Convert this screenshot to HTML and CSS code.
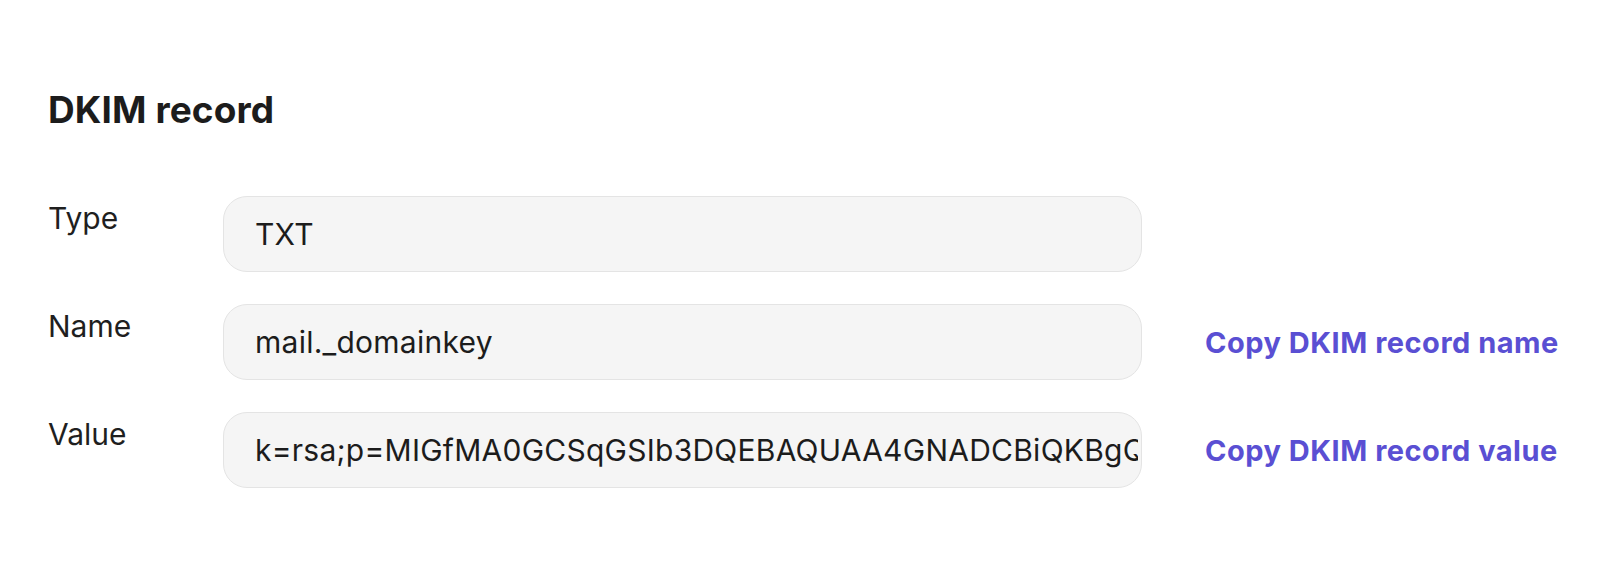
FILE: index.html
```html
<!DOCTYPE html>
<html lang="en">
<head>
  <meta charset="UTF-8">
  <meta name="viewport" content="width=device-width, initial-scale=1.0">
  <title>DKIM record</title>
  <link rel="stylesheet" href="styles.css">
</head>
<body>
  <div class="dns-record">
    <h2>DKIM record</h2>

    <div class="record-grid">
      <label for="dkimType">Type</label>
      <input type="text" id="dkimType" value="TXT" readonly>
      <span></span>

      <label for="dkimName">Name</label>
      <input type="text" id="dkimName" value="mail._domainkey" readonly>
      <a href="#" class="copy-link">Copy DKIM record name</a>

      <label for="dkimValue">Value</label>
      <input type="text" id="dkimValue" value="k=rsa;p=MIGfMA0GCSqGSIb3DQEBAQUAA4GNADCBiQKBgQC3x7Vq9Lm2bT0kF8dYwR1eHnZp4uGjA6sQoXcE5vN2yKiD7lMfWtPb0hU9rSgJq3aLzC1nOeVdY8xBwT6kRmFpIuH2jN4sZ5oA7bQIDAQAB" readonly>
      <a href="#" class="copy-link">Copy DKIM record value</a>
    </div>
  </div>
</body>
</html>
```

FILE: styles.css
```css
body {
  margin: 0;
  font-family: Inter, "Noto Sans", sans-serif;
  background: #ffffff;
  color: #1c1c1c;
}
.dns-record {
  padding: 88px 48px 0 48px;
}
h2 {
  margin: 0 0 64px 0;
  font-size: 37px;
  line-height: 44px;
  font-weight: 700;
  letter-spacing: 0.1px;
  color: #1c1c1c;
}
.record-grid {
  display: grid;
  grid-template-columns: 175px 919px auto;
  row-gap: 32px;
  align-items: start;
}
label {
  padding-top: 4px;
  font-size: 30px;
  line-height: 36px;
  color: #1f1f1f;
}
input[type="text"] {
  box-sizing: border-box;
  width: 100%;
  height: 76px;
  padding: 0 3px 0 31px;
  border: 1px solid #e4e4e4;
  border-radius: 24px;
  background: #f5f5f5;
  font-family: inherit;
  font-size: 30px;
  letter-spacing: 0.25px;
  color: #1c1c1c;
  outline: none;
}
.copy-link {
  align-self: center;
  margin-left: 63px;
  font-size: 29px;
  font-weight: 700;
  letter-spacing: 0.5px;
  color: #5a4fd3;
  text-decoration: none;
  white-space: nowrap;
}
```
